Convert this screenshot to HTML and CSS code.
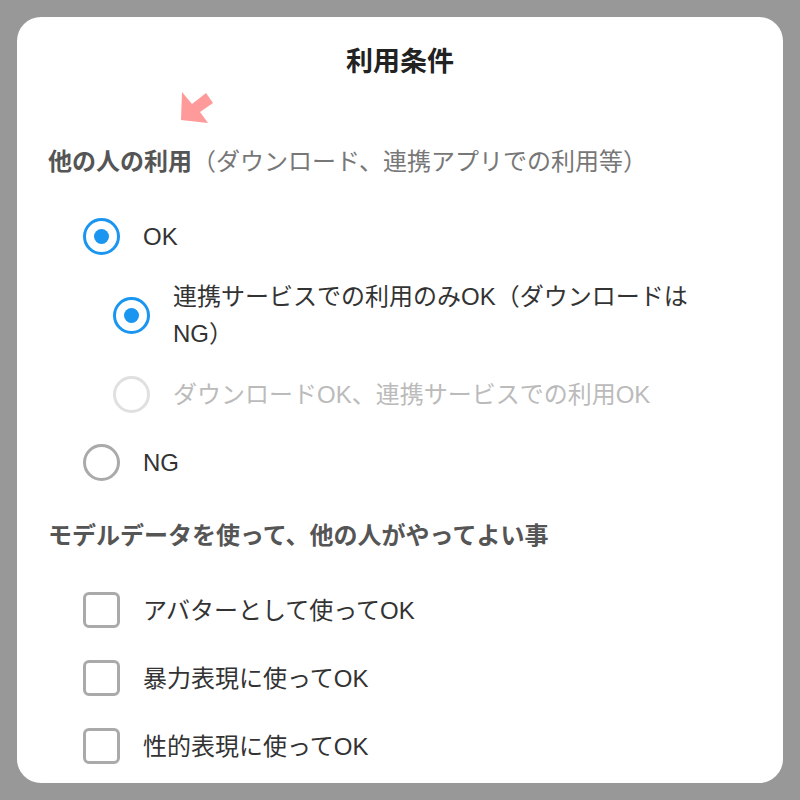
FILE: index.html
```html
<!DOCTYPE html>
<html lang="ja">
<head>
<meta charset="utf-8">
<title>利用条件</title>
<link rel="stylesheet" href="styles.css">
</head>
<body>
<div class="card">
  <h1 class="title">利用条件</h1>
  <svg class="arrow" width="40" height="40" viewBox="0 0 40 40" aria-hidden="true">
    <polygon points="4,4 3,32 30,35 22,24 35,15 28,5 14,16" fill="#ff9a9a"/>
  </svg>

  <div class="section-head"><b>他の人の利用</b><span class="sub">（ダウンロード、連携アプリでの利用等）</span></div>
  <div class="options">
    <div class="row">
      <span class="radio checked"></span>
      <span class="label">OK</span>
    </div>
    <div class="row sub-row">
      <span class="radio checked"></span>
      <span class="label">連携サービスでの利用のみOK（ダウンロードはNG）</span>
    </div>
    <div class="row sub-row disabled">
      <span class="radio"></span>
      <span class="label">ダウンロードOK、連携サービスでの利用OK</span>
    </div>
    <div class="row">
      <span class="radio"></span>
      <span class="label">NG</span>
    </div>
  </div>

  <div class="section-head"><b>モデルデータを使って、他の人がやってよい事</b></div>
  <div class="options">
    <div class="row">
      <span class="checkbox"></span>
      <span class="label">アバターとして使ってOK</span>
    </div>
    <div class="row">
      <span class="checkbox"></span>
      <span class="label">暴力表現に使ってOK</span>
    </div>
    <div class="row">
      <span class="checkbox"></span>
      <span class="label">性的表現に使ってOK</span>
    </div>
  </div>
</div>
</body>
</html>
```

FILE: styles.css
```css
* { box-sizing: border-box; }

html, body {
  margin: 0;
  padding: 0;
  background: #989898;
}

body {
  padding: 17px;
  font-family: "Liberation Sans", "Noto Sans CJK JP", sans-serif;
  color: #333;
}

.card {
  position: relative;
  background: #fff;
  border-radius: 24px;
  height: 766px;
  overflow: hidden;
  padding: 25px 31px 0 31px;
}

.title {
  margin: 0;
  text-align: center;
  font-size: 27px;
  line-height: 40px;
  font-weight: 700;
  color: #222;
}

.arrow {
  position: absolute;
  left: 161px;
  top: 71px;
}

.section-head {
  margin-top: 0;
  padding: 22px 0;
  font-size: 24px;
  line-height: 36px;
  color: #555;
}

.title + .arrow + .section-head {
  margin-top: 40px;
}

.section-head b {
  font-weight: 700;
}

.section-head .sub {
  font-weight: 400;
  color: #777;
}

.options {
  padding-right: 20px;
}

.row {
  display: flex;
  align-items: center;
  min-height: 68px;
  padding: 8px 0 8px 35px;
  gap: 23px;
}

.row.sub-row {
  padding-left: 65px;
}

.label {
  font-size: 24px;
  line-height: 37px;
  color: #333;
}

.row.disabled .label {
  color: #bbb;
}

.radio {
  position: relative;
  flex: none;
  width: 37px;
  height: 37px;
  border-radius: 50%;
  border: 3px solid #aaa;
}

.radio.checked {
  border-color: #1a96f0;
}

.radio.checked::after {
  content: "";
  position: absolute;
  left: 50%;
  top: 50%;
  width: 15px;
  height: 15px;
  margin: -7.5px 0 0 -7.5px;
  border-radius: 50%;
  background: #1a96f0;
}

.row.disabled .radio {
  border-color: #e0e0e0;
}

.checkbox {
  flex: none;
  width: 37px;
  height: 36px;
  border: 3px solid #aaa;
  border-radius: 6px;
}
```
